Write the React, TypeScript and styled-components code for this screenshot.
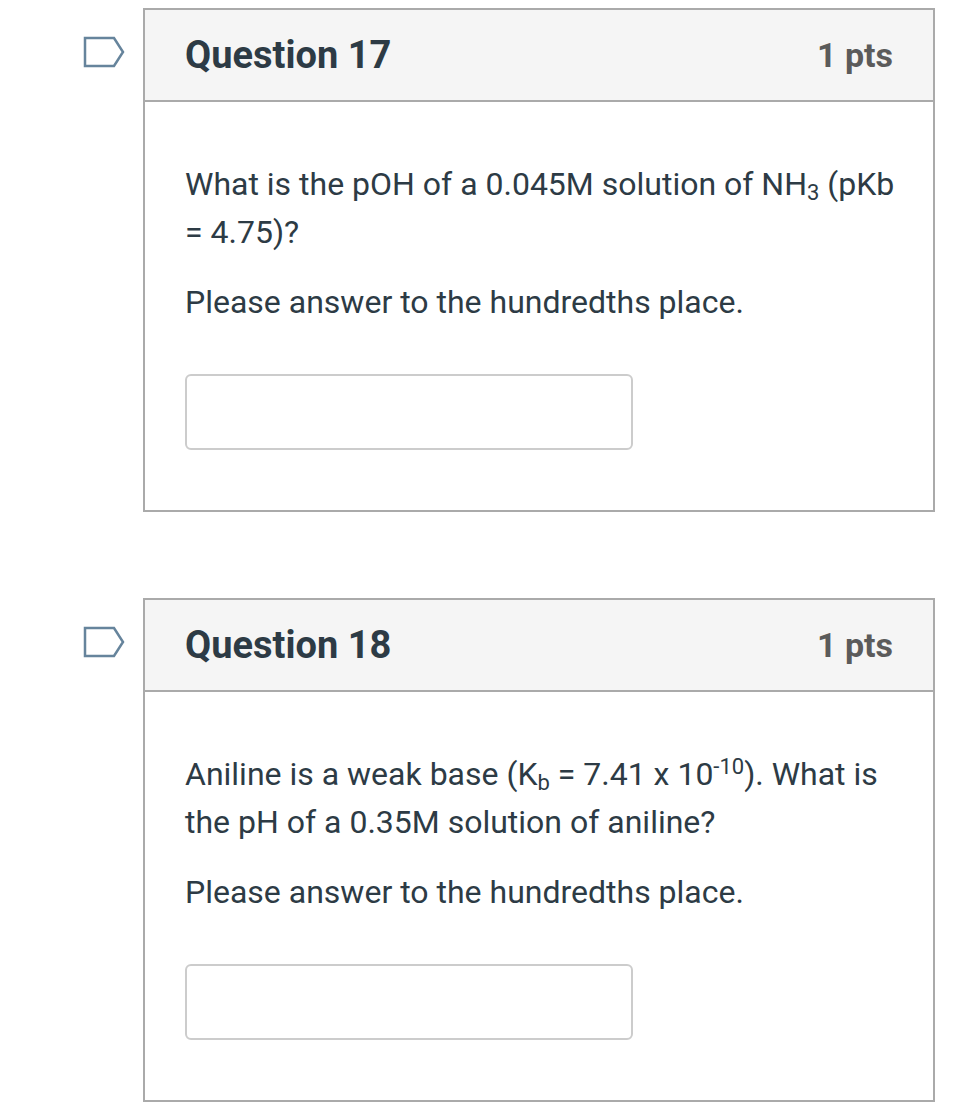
import React from 'react';
import styled, { createGlobalStyle } from 'styled-components';

const GlobalStyle = createGlobalStyle`
  body {
    margin: 0;
    background: #ffffff;
    font-family: Roboto, "Liberation Sans", Arial, sans-serif;
  }
`;

const Page = styled.div`
  display: flex;
  flex-direction: column;
  gap: 86px;
  padding: 8px 0 0 0;
`;

const QuestionRow = styled.div`
  display: flex;
  align-items: flex-start;
`;

const FlagSlot = styled.div`
  width: 143px;
  display: flex;
  justify-content: flex-start;
  padding: 28px 0 0 83px;
  box-sizing: border-box;
`;

const Card = styled.div`
  width: 792px;
  border: 2px solid #aaaaaa;
  box-sizing: border-box;
  background: #fff;
`;

const Header = styled.div`
  height: 90px;
  background: #f5f5f5;
  border-bottom: 2px solid #aaaaaa;
  display: flex;
  align-items: center;
  justify-content: space-between;
  padding: 0 40px;
`;

const Title = styled.h2`
  margin: 0;
  font-size: 38px;
  font-weight: 700;
  color: #2d3b45;
`;

const Points = styled.div`
  font-size: 34px;
  font-weight: 700;
  color: #5b5b5b;
`;

const Body = styled.div`
  padding: 58px 32px 60px 40px;
  color: #2d3b45;
`;

const Para = styled.p`
  margin: 0 0 22px 0;
  font-size: 32px;
  line-height: 48px;
`;

const AnswerBox = styled.input`
  display: block;
  margin-top: 48px;
  width: 448px;
  height: 76px;
  box-sizing: border-box;
  border: 2px solid #cccccc;
  border-radius: 6px;
  background: #fff;
  outline: none;
`;

const Sub = styled.sub`
  font-size: 22px;
  line-height: 0;
  vertical-align: -5px;
`;

const Sup = styled.sup`
  font-size: 22px;
  line-height: 0;
  vertical-align: 11px;
`;

function Flag() {
  return (
    <svg width="42" height="32" viewBox="0 0 42 32">
      <path
        d="M2 2 H31 L40 16 L31 30 H2 Z"
        fill="none"
        stroke="#66849c"
        strokeWidth="2.5"
        strokeLinejoin="miter"
      />
    </svg>
  );
}

function Question({ num, children }: { num: number; children: React.ReactNode }) {
  return (
    <QuestionRow>
      <FlagSlot>
        <Flag />
      </FlagSlot>
      <Card>
        <Header>
          <Title>Question {num}</Title>
          <Points>1 pts</Points>
        </Header>
        <Body>
          {children}
          <Para>Please answer to the hundredths place.</Para>
          <AnswerBox type="text" />
        </Body>
      </Card>
    </QuestionRow>
  );
}

export default function App() {
  return (
    <>
      <GlobalStyle />
      <Page>
        <Question num={17}>
          <Para>
            What is the pOH of a 0.045M solution of NH<Sub>3</Sub> (pKb = 4.75)?
          </Para>
        </Question>
        <Question num={18}>
          <Para>
            Aniline is a weak base (K<Sub>b</Sub> = 7.41 x 10<Sup>-10</Sup>). What is the pH of a
            0.35M solution of aniline?
          </Para>
        </Question>
      </Page>
    </>
  );
}
